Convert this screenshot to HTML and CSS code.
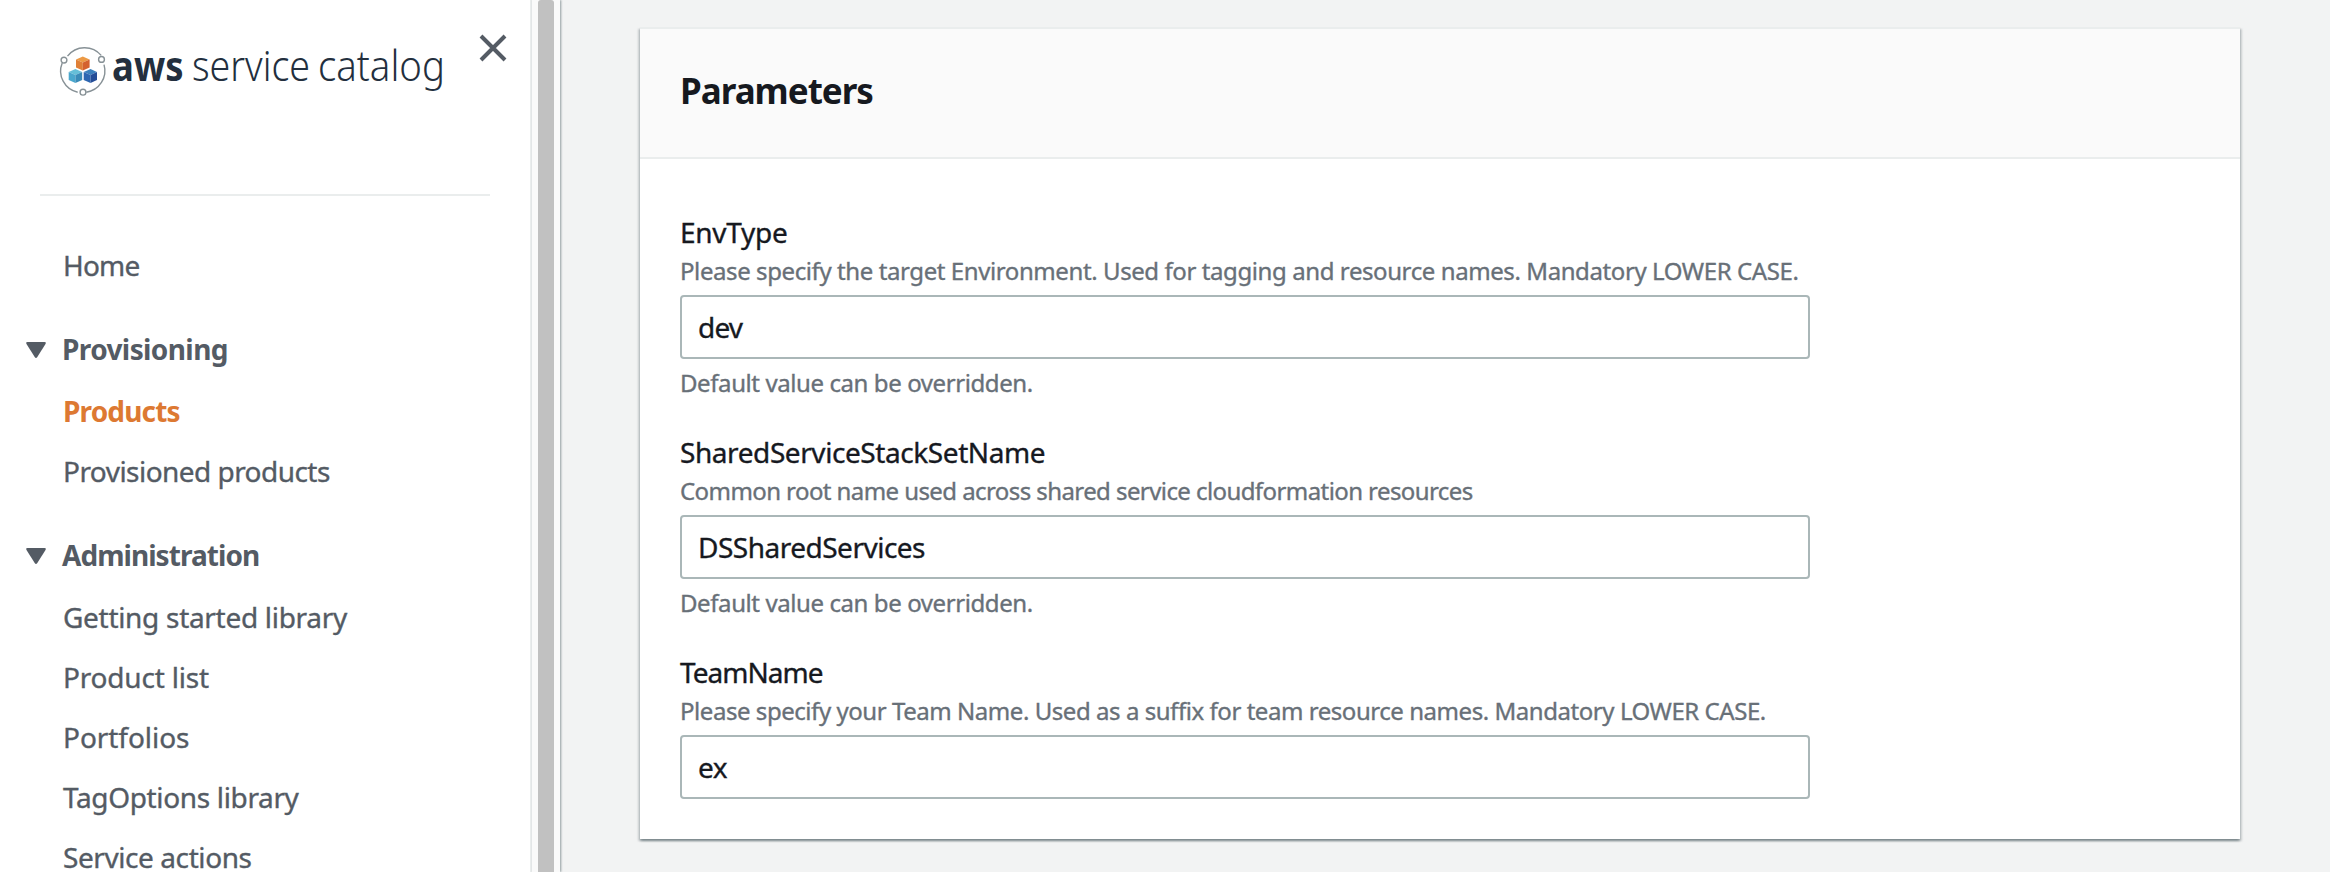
FILE: index.html
```html
<!DOCTYPE html>
<html lang="en">
<head>
<meta charset="utf-8">
<title>AWS Service Catalog</title>
<link rel="stylesheet" href="styles.css">
</head>
<body>
<div class="app">
  <aside class="sidebar">
    <header class="brand">
      <svg class="brand-logo" width="390" height="80" viewBox="0 -12 390 80" role="img" aria-label="aws service catalog">
        <g transform="translate(0 .6)">
        <g fill="none" stroke="#879196" stroke-width="1.4">
          <path d="M7.500 15.500A21.700 21.700 0 0 1 41.200 14.800M44 24A21.700 21.700 0 0 1 26.300 51.600M17.700 51.600A21.700 21.700 0 0 1 2.200 22.300"/>
          <circle cx="4" cy="19.500" r="2.900"/>
          <circle cx="41.500" cy="18.800" r="2.900"/>
          <circle cx="23" cy="51.600" r="2.900"/>
        </g>
        <path fill="#ec9a45" d="M16 19l6.800-3 6.800 3-6.800 3z"/>
        <path fill="#e08038" d="M16 19l6.800 3v8l-6.800-3z"/>
        <path fill="#d4622f" d="M29.600 19l-6.800 3v8l6.800-3z"/>
        <path fill="#66bfd8" d="M8.700 31.500l6.700-3 6.800 3-6.800 3z"/>
        <path fill="#4aa7cd" d="M8.700 31.500l6.700 3v8l-6.700-3z"/>
        <path fill="#3a8bb8" d="M22.200 31.500l-6.800 3v8l6.800-3z"/>
        <path fill="#3b80bd" d="M23.700 31.500l6.800-3 6.500 3-6.500 3z"/>
        <path fill="#2d66b1" d="M23.700 31.500l6.800 3v8l-6.800-3z"/>
        <path fill="#244d97" d="M37 31.500l-6.500 3v8l6.500-3z"/>
        </g>
        <text class="brand-aws" x="52" y="41" textLength="71.500" lengthAdjust="spacingAndGlyphs">aws</text>
        <text class="brand-service" x="132" y="41" textLength="118" lengthAdjust="spacingAndGlyphs">service</text>
        <text class="brand-service" x="258" y="41" textLength="127" lengthAdjust="spacingAndGlyphs">catalog</text>
      </svg>
      <svg class="close" width="28" height="28" viewBox="0 0 28 28" aria-label="Close">
        <path d="M2 2L26 26M26 2L2 26" stroke="#545b64" stroke-width="4" fill="none"/>
      </svg>
    </header>
    <nav class="nav">
      <a class="nav-item t-80">Home</a>
      <div class="nav-group t-60"><svg class="caret" width="20" height="16" viewBox="0 0 20 16"><path d="M1.500 0h17Q20.500 0 19.500 1.900L11.300 15Q10 17 8.700 15L.5 1.900Q-.5 0 1.500 0z" fill="#545b64"/></svg>Provisioning</div>
      <a class="nav-item nav-item--active t-83">Products</a>
      <a class="nav-item t-54">Provisioned products</a>
      <div class="nav-group t-95"><svg class="caret" width="20" height="16" viewBox="0 0 20 16"><path d="M1.500 0h17Q20.500 0 19.500 1.900L11.300 15Q10 17 8.700 15L.5 1.900Q-.5 0 1.500 0z" fill="#545b64"/></svg>Administration</div>
      <a class="nav-item t-35">Getting started library</a>
      <a class="nav-item t-20">Product list</a>
      <a class="nav-item t-5">Portfolios</a>
      <a class="nav-item t-39">TagOptions library</a>
      <a class="nav-item t-46">Service actions</a>
    </nav>
  </aside>
  <div class="scrollbar"><div class="scrollbar-thumb"></div></div>
  <main class="main">
    <section class="card">
      <header class="card-header"><h2 class="card-title">Parameters</h2></header>
      <div class="card-body">
        <div class="field">
          <label class="field-label t-27">EnvType</label>
          <p class="field-hint t-40">Please specify the target Environment. Used for tagging and resource names. Mandatory LOWER CASE.</p>
          <div class="field-input t-80">dev</div>
          <p class="field-note t-40">Default value can be overridden.</p>
        </div>
        <div class="field">
          <label class="field-label t-46">SharedServiceStackSetName</label>
          <p class="field-hint t-58">Common root name used across shared service cloudformation resources</p>
          <div class="field-input t-50">DSSharedServices</div>
          <p class="field-note t-40">Default value can be overridden.</p>
        </div>
        <div class="field">
          <label class="field-label t-95">TeamName</label>
          <p class="field-hint t-45">Please specify your Team Name. Used as a suffix for team resource names. Mandatory LOWER CASE.</p>
          <div class="field-input t-50">ex</div>
        </div>
      </div>
    </section>
  </main>
</div>
</body>
</html>
```
FILE: styles.css
```css
* { box-sizing: border-box; }

body {
  margin: 0;
  height: 872px;
  overflow: hidden;
  background: #f2f3f3;
  color: #16191f;
  font-family: "Noto Sans", "Open Sans", sans-serif;
  font-size: 28px;
}

.app { display: flex; height: 872px; overflow: hidden; }

/* Side navigation */
.sidebar {
  flex: none;
  width: 532px;
  background: #fff;
  border-right: 2px solid #eaeded;
}

.brand {
  display: flex;
  align-items: flex-start;
  justify-content: space-between;
  height: 196px;
  margin: 0 0 0 40px;
  padding: 34px 23px 0 20px;
  position: relative;
}

.brand::after {
  content: "";
  position: absolute;
  left: 0;
  bottom: 0;
  width: 450px;
  height: 2px;
  background: #eaeded;
}

.brand-logo { margin-top: -6px; overflow: visible; }
.brand-aws { font-size: 42px; font-weight: 700; fill: #232f3e; }
.brand-service { font-size: 42px; font-weight: 300; fill: #232f3e; }
.close { display: block; }

.nav { padding-top: 39px; color: #545b64; }
.nav-item { display: block; height: 60px; line-height: 60px; padding-left: 63px; white-space: nowrap; -webkit-text-stroke: 0.35px; }
.nav-item--active { color: #dd7932; font-weight: 700; -webkit-text-stroke: 0; }

.nav-group {
  display: flex;
  align-items: center;
  height: 60px;
  margin: 24px 0 2px;
  padding-left: 26px;
  gap: 16px;
  font-weight: 700;
  line-height: 60px;
}

.caret { display: block; margin-top: 2px; }

/* Sidebar scroll track */
.scrollbar {
  flex: none;
  width: 28px;
  padding-left: 6px;
  background: #fafafa;
  z-index: 1;
  box-shadow: 1px 0 2px rgba(0, 28, 36, 0.4);
}

.scrollbar-thumb { width: 16px; height: 100%; background: #c1c1c1; border-radius: 3px 3px 0 0; }

/* Parameters panel */
.main { flex: 1; padding: 27px 90px 0 80px; background: #f2f3f3; }

.card {
  height: 812px;
  background: #fff;
  border-top: 2px solid #eaeded;
  box-shadow: 0 2px 2px rgba(0, 28, 36, 0.3), 2px 2px 2px rgba(0, 28, 36, 0.15), -2px 2px 2px rgba(0, 28, 36, 0.15);
}

.card-header { height: 130px; padding: 37px 40px 0; background: #fafafa; border-bottom: 2px solid #eaeded; }
.card-title { margin: 0; font-size: 35px; line-height: 50px; letter-spacing: -1px; }

.card-body { display: flex; flex-direction: column; gap: 32px; padding: 53px 40px 40px; }
.field { width: 1130px; -webkit-text-stroke: 0.35px; }
.field-label { display: block; line-height: 40px; }
.field-hint, .field-note { margin: 1px 0 7px; font-size: 24px; line-height: 35px; color: #687078; white-space: nowrap; }
.field-note { margin: 6px 0 0; }
.field-input { height: 64px; padding-left: 16px; border: 2px solid #aab7b8; border-radius: 4px; line-height: 60px; }

/* Tracking steps, in hundredths of a pixel */
.t-5 { letter-spacing: -0.05px; }
.t-20 { letter-spacing: -0.2px; }
.t-27 { letter-spacing: -0.27px; }
.t-35 { letter-spacing: -0.3px; }
.t-39 { letter-spacing: -0.35px; }
.t-40 { letter-spacing: -0.41px; }
.t-45 { letter-spacing: -0.45px; }
.t-46 { letter-spacing: -0.42px; }
.t-50 { letter-spacing: -0.5px; }
.t-54 { letter-spacing: -0.54px; }
.t-58 { letter-spacing: -0.58px; }
.t-60 { letter-spacing: -0.6px; }
.t-80 { letter-spacing: -0.8px; }
.t-83 { letter-spacing: -0.83px; }
.t-95 { letter-spacing: -0.95px; }
```
